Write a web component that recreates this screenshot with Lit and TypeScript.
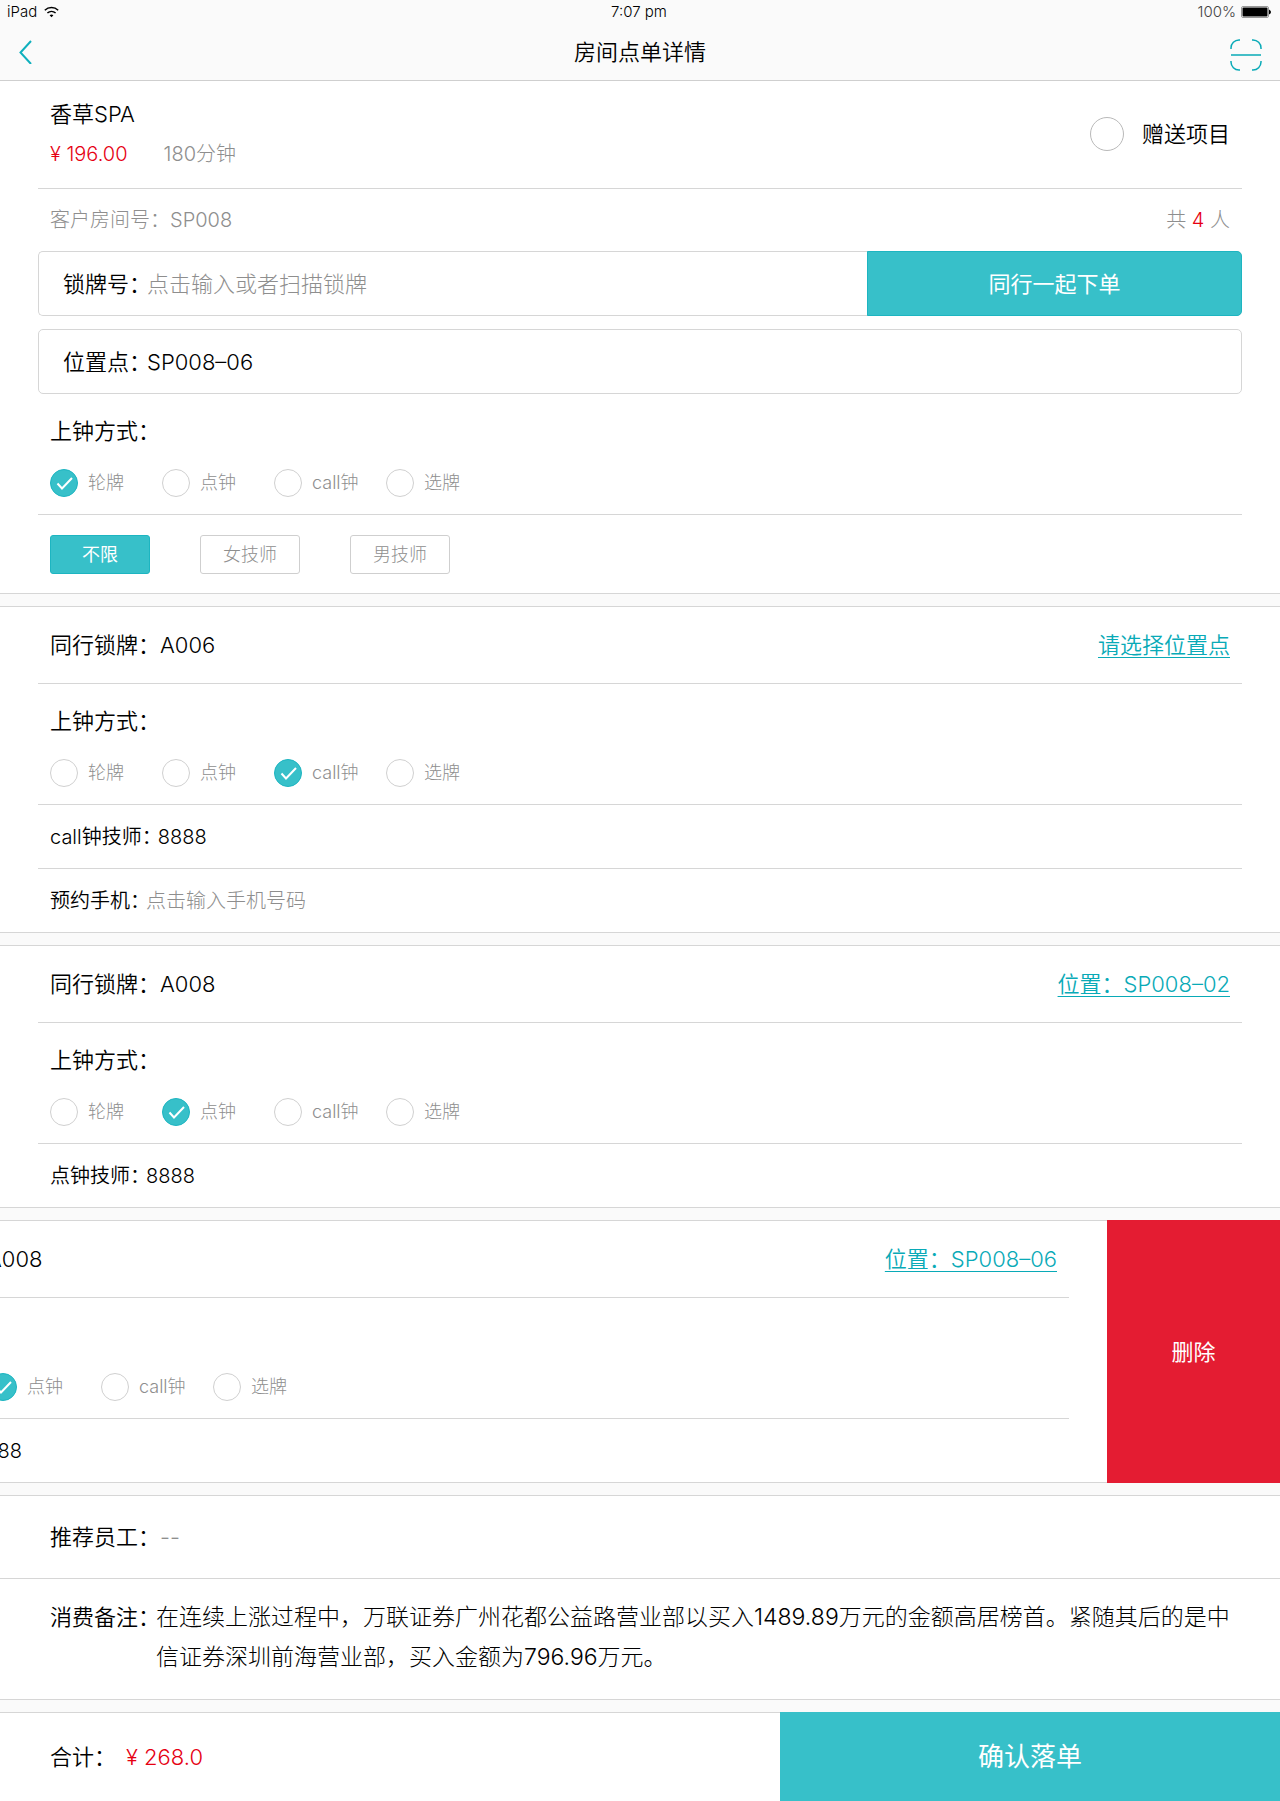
import { LitElement, html, css, svg, nothing } from "lit";
import { customElement, property } from "lit/decorators.js";

const METHODS = ["轮牌", "点钟", "call钟", "选牌"];

const shared = css`
  :host {
    display: block;
  }
  * {
    box-sizing: border-box;
  }
  input,
  button {
    font: inherit;
    color: inherit;
    margin: 0;
    padding: 0;
    border: 0;
    background: none;
  }
  button {
    cursor: pointer;
  }
  .mark {
    display: grid;
    flex: none;
  }
  .mark > * {
    grid-area: 1 / 1;
  }
  .dot {
    appearance: none;
    width: 28px;
    height: 28px;
    border: 1px solid #d0d0d0;
    border-radius: 50%;
    background: #fff;
  }
  .dot.large {
    width: 34px;
    height: 34px;
    border-color: #b9b9b9;
  }
  .dot:checked {
    border-color: #1db5c1;
    background: #37c0c9;
  }
  .tick {
    display: none;
    pointer-events: none;
    width: 28px;
    height: 28px;
  }
  .dot:checked + .tick {
    display: block;
  }
  .label {
    white-space: nowrap;
    font-weight: 350;
  }
  .tight {
    margin-right: -4px;
  }
`;

/** Row of radio buttons that picks how the technician is assigned. */
@customElement("clock-method")
export class ClockMethod extends LitElement {
  @property() selected = "";

  static styles = [
    shared,
    css`
      .method {
        border: 0;
        margin: 0;
        min-width: 0;
        padding: 22px 12px 17px;
      }
      .title {
        float: left;
        width: 100%;
        padding: 0;
        margin-bottom: 23px;
        line-height: 30px;
      }
      .options {
        clear: both;
        display: grid;
        grid-template-columns: repeat(4, 112px);
      }
      .option {
        display: flex;
        align-items: center;
        gap: 10px;
        font-size: 18px;
        line-height: 28px;
        color: #8e8e8e;
        white-space: nowrap;
      }
    `,
  ];

  render() {
    return html`
      <fieldset class="method">
        <legend class="title label">上钟方式：</legend>
        <div class="options">
          ${METHODS.map(
            (m) => html`
              <label class="option">
                <span class="mark">
                  <input class="dot" type="radio" name="method" .checked=${m === this.selected} />
                  <svg class="tick" viewBox="0 0 28 28" fill="none" stroke="#fff" stroke-width="2">
                    <path d="M7.5 14.5 L12 19.5 L22 9" />
                  </svg>
                </span>
                <span>${m}</span>
              </label>
            `
          )}
        </div>
      </fieldset>
    `;
  }
}

/** Lock tag of a companion with its position, clock method and technician. */
@customElement("companion-card")
export class CompanionCard extends LitElement {
  @property() tag = "";
  @property() place = "";
  @property() method = "";
  @property() technician = "";
  @property({ type: Boolean }) phone = false;
  @property({ type: Boolean }) swiped = false;

  static styles = [
    shared,
    css`
      .track {
        display: flex;
        overflow: hidden;
      }
      .card {
        flex: none;
        width: 100%;
        border: solid #d6d6d6;
        border-width: 1px 0;
        padding: 0 38px;
        background: #fff;
      }
      .track.swiped .card {
        margin-left: -173px;
      }
      .row {
        display: flex;
        align-items: center;
        padding: 0 12px;
      }
      .head {
        height: 76px;
        justify-content: space-between;
      }
      .detail {
        height: 64px;
        font-size: 20px;
      }
      .line {
        border-top: 1px solid #d6d6d6;
      }
      .place {
        color: #09aab7;
        font-weight: 350;
        text-decoration: underline;
        text-decoration-thickness: 1px;
        text-underline-offset: 4px;
      }
      .phone {
        flex: 1;
        min-width: 0;
        height: 40px;
        outline: none;
      }
      .phone::placeholder {
        color: #8e8e8e;
        opacity: 1;
      }
      .delete {
        flex: none;
        width: 173px;
        background: #e41c32;
        color: #fff;
        font-weight: 400;
      }
    `,
  ];

  render() {
    return html`
      <div class="track ${this.swiped ? "swiped" : ""}">
        <section class="card">
          <div class="row head">
            <span class="label">同行锁牌：${this.tag}</span>
            <a class="place" href="#place">${this.place}</a>
          </div>
          <div class="line"><clock-method .selected=${this.method}></clock-method></div>
          <div class="row detail line">
            <span class="label tight">${this.method}技师：</span>
            <span>${this.technician}</span>
          </div>
          ${this.phone
            ? html`<div class="row detail line">
                <label class="label tight" for="phone">预约手机：</label>
                <input class="phone" id="phone" type="tel" placeholder="点击输入手机号码" />
              </div>`
            : nothing}
        </section>
        ${this.swiped ? html`<button class="delete" type="button">删除</button>` : nothing}
      </div>
    `;
  }
}

const wifiIcon = svg`
  <path d="M0.8 4.2 A10 10 0 0 1 14.2 4.2" />
  <path d="M3.4 7 A6.2 6.2 0 0 1 11.6 7" />
  <path d="M5.6 9.2 A3 3 0 0 1 9.4 9.2 L7.5 11.2 Z" fill="#000" stroke="none" />
`;

@customElement("app-root")
export class AppRoot extends LitElement {
  static styles = [
    shared,
    css`
      :host {
        font-family: Inter, "Noto Sans CJK SC", sans-serif;
        font-size: 22px;
        font-weight: 300;
        line-height: 30px;
        color: #000;
        background: #fafafa;
      }
      .top {
        border-bottom: 1px solid #cfcfcf;
      }
      .status,
      .nav {
        display: grid;
        grid-template-columns: 1fr auto 1fr;
        align-items: center;
      }
      .status {
        height: 24px;
        padding: 0 9px 0 7px;
        font-size: 15px;
        line-height: 24px;
      }
      .nav {
        height: 56px;
        padding: 0 18px;
      }
      .side {
        display: flex;
        align-items: center;
        gap: 7px;
      }
      .end {
        justify-content: flex-end;
        gap: 5px;
      }
      .time {
        font-weight: 350;
      }
      .faint {
        color: #444;
      }
      .title {
        margin: 0;
        font-size: 22px;
        font-weight: 350;
      }
      .icon {
        display: block;
      }
      .page {
        display: flex;
        flex-direction: column;
        gap: 12px;
      }
      .panel {
        border: solid #d6d6d6;
        border-width: 1px 0;
        background: #fff;
      }
      .first {
        border-top: 0;
        padding: 0 38px;
      }
      .row {
        display: flex;
        align-items: center;
        justify-content: space-between;
        padding: 0 12px;
      }
      .item {
        height: 107px;
        padding-bottom: 2px;
      }
      .name {
        margin: 0 0 10px;
        font-size: 22px;
        font-weight: 350;
      }
      .facts {
        display: flex;
        gap: 36px;
        font-size: 20px;
      }
      .red {
        color: #e60012;
      }
      .grey {
        color: #8e8e8e;
      }
      .gift {
        display: flex;
        align-items: center;
        gap: 18px;
      }
      .line {
        border-top: 1px solid #d6d6d6;
      }
      .room {
        height: 63px;
        font-size: 20px;
      }
      .field {
        display: flex;
        align-items: center;
        height: 65px;
        border: 1px solid #d6d6d6;
        border-radius: 5px;
        padding-left: 24px;
      }
      .lock {
        margin-bottom: 13px;
        border-right: 0;
      }
      .entry {
        flex: 1;
        min-width: 0;
        height: 44px;
        outline: none;
      }
      .entry::placeholder {
        color: #8e8e8e;
        opacity: 1;
      }
      .together {
        flex: 0 0 375px;
        height: 65px;
        border: 1px solid #1db5c1;
        border-radius: 0 5px 5px 0;
        background: #37c0c9;
        color: #fff;
        font-weight: 400;
      }
      .choices {
        display: flex;
        gap: 50px;
        padding: 20px 12px 19px;
      }
      .choice {
        width: 100px;
        height: 39px;
        border: 1px solid #cfcfcf;
        border-radius: 3px;
        font-size: 18px;
        color: #8e8e8e;
      }
      .choice.on {
        border-color: #1db5c1;
        background: #37c0c9;
        color: #fff;
        font-weight: 400;
      }
      .staff,
      .remark {
        display: flex;
        padding: 0 38px 0 50px;
      }
      .staff {
        height: 82px;
        align-items: center;
      }
      .remark {
        padding-top: 18px;
        padding-bottom: 22px;
        line-height: 40px;
      }
      .note {
        margin: 0;
        font-size: 23px;
      }
      .footer {
        display: flex;
        height: 89px;
        border-top: 1px solid #d6d6d6;
        background: #fff;
      }
      .total {
        flex: 1;
        display: flex;
        align-items: center;
        gap: 10px;
        padding-left: 50px;
      }
      .confirm {
        flex: 0 0 500px;
        margin-top: -1px;
        background: #37c0c9;
        color: #fff;
        font-size: 26px;
        font-weight: 400;
      }
    `,
  ];

  render() {
    return html`
      <div lang="zh-CN">
        <header class="top">
          <div class="status">
            <span class="side">
              <span>iPad</span>
              <svg class="icon" width="15" height="12" viewBox="0 0 15 12" fill="none" stroke="#000" stroke-width="1.5">
                ${wifiIcon}
              </svg>
            </span>
            <span class="time">7:07 pm</span>
            <span class="side end">
              <span class="faint">100%</span>
              <svg class="icon" width="30" height="12" viewBox="0 0 30 12">
                <rect x="0.5" y="0.5" width="27" height="11" rx="1.5" fill="#fff" stroke="#999" />
                <rect x="1.5" y="1.5" width="25" height="9" rx="1" />
                <path d="M28 3.5 Q30 4.5 30 6 Q30 7.5 28 8.5 Z" />
              </svg>
            </span>
          </div>
          <nav class="nav">
            <span class="side">
              <button type="button" aria-label="返回">
                <svg class="icon" width="15" height="24" viewBox="0 0 15 24" fill="none" stroke="#0fb0bd" stroke-width="2">
                  <path d="M13 1 L2.5 12.5 L13 24" />
                </svg>
              </button>
            </span>
            <h1 class="title">房间点单详情</h1>
            <span class="side end">
              <button type="button" aria-label="扫描">
                <svg class="icon" width="32" height="38" viewBox="0 0 32 38" fill="none" stroke="#09aab7" stroke-width="1.5">
                  <path d="M1 16 V15 A8 8 0 0 1 9 7 H10 M22 7 H23 A8 8 0 0 1 31 15 V16 M31 28 V29 A8 8 0 0 1 23 37 H22 M10 37 H9 A8 8 0 0 1 1 29 V28 M1 22 H31" />
                </svg>
              </button>
            </span>
          </nav>
        </header>

        <main class="page">
          <section class="panel first">
            <div class="row item">
              <div>
                <h2 class="name">香草SPA</h2>
                <div class="facts">
                  <span class="red">¥ 196.00</span>
                  <span class="grey">180分钟</span>
                </div>
              </div>
              <label class="gift label">
                <input class="dot large" type="checkbox" />
                <span>赠送项目</span>
              </label>
            </div>
            <div class="row room line grey">
              <span>客户房间号：SP008</span>
              <span>共 <span class="red">4</span> 人</span>
            </div>
            <div class="field lock">
              <label class="label tight" for="lock">锁牌号：</label>
              <input class="entry" id="lock" type="text" placeholder="点击输入或者扫描锁牌" />
              <button class="together" type="button">同行一起下单</button>
            </div>
            <div class="field">
              <label class="label tight" for="spot">位置点：</label>
              <input class="entry" id="spot" type="text" value="SP008–06" />
            </div>
            <clock-method .selected=${"轮牌"}></clock-method>
            <div class="choices line">
              <button class="choice on" type="button">不限</button>
              <button class="choice" type="button">女技师</button>
              <button class="choice" type="button">男技师</button>
            </div>
          </section>

          <companion-card tag="A006" place="请选择位置点" method="call钟" technician="8888" phone></companion-card>
          <companion-card tag="A008" place="位置：SP008–02" method="点钟" technician="8888"></companion-card>
          <companion-card tag="A008" place="位置：SP008–06" method="点钟" technician="8888" swiped></companion-card>

          <section class="panel">
            <div class="staff">
              <span class="label">推荐员工：</span>
              <span class="grey">--</span>
            </div>
            <div class="remark line">
              <span class="label tight">消费备注：</span>
              <p class="note">在连续上涨过程中，万联证券广州花都公益路营业部以买入1489.89万元的金额高居榜首。紧随其后的是中信证券深圳前海营业部，买入金额为796.96万元。</p>
            </div>
          </section>

          <footer class="footer">
            <div class="total">
              <span class="label">合计：</span>
              <span class="red">¥ 268.0</span>
            </div>
            <button class="confirm" type="button">确认落单</button>
          </footer>
        </main>
      </div>
    `;
  }
}
